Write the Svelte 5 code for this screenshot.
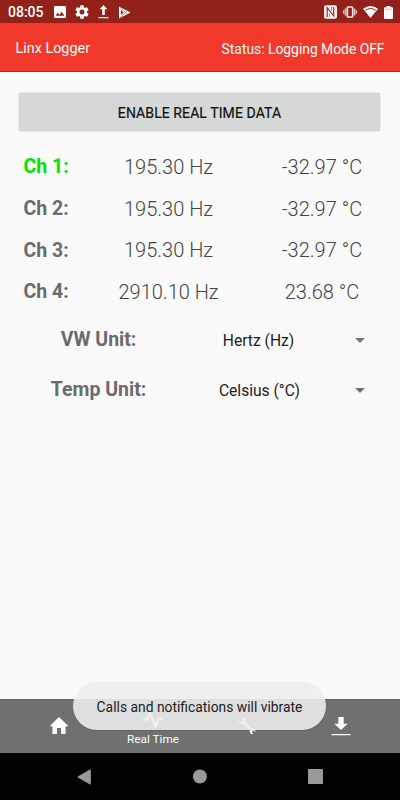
<script>
  const channels = [
    { name: 'Ch 1:', freq: '195.30 Hz', temp: '-32.97 °C', active: true },
    { name: 'Ch 2:', freq: '195.30 Hz', temp: '-32.97 °C' },
    { name: 'Ch 3:', freq: '195.30 Hz', temp: '-32.97 °C' },
    { name: 'Ch 4:', freq: '2910.10 Hz', temp: '23.68 °C' }
  ];
  const units = [
    { label: 'VW Unit:', value: 'Hertz (Hz)' },
    { label: 'Temp Unit:', value: 'Celsius (°C)' }
  ];
</script>

<div class="screen">
  <div class="statusbar">
    <span class="time">08:05</span>
    <div class="left-icons">
      <svg width="12" height="12" viewBox="0 0 12 12"><path fill="#fff" fill-rule="evenodd" d="M1.3 0h9.4Q12 0 12 1.3v9.4q0 1.3-1.3 1.3H1.3Q0 12 0 10.700V1.300Q0 0 1.300 0zM1.500 9.700h9L7.700 5.700 5.400 8.700 3.700 6.700z" /></svg>
      <svg width="14" height="14" viewBox="2 2 20 20"><path fill="#fff" d="M19.140 12.940c.04-.3.060-.61.060-.94s-.02-.64-.07-.94l2.030-1.580a.49.49 0 0 0 .12-.61l-1.920-3.320a.49.49 0 0 0-.59-.22l-2.390.96a7 7 0 0 0-1.620-.94l-.36-2.540A.48.48 0 0 0 13.920 2.400h-3.840a.48.48 0 0 0-.47.41l-.36 2.540a7.400 7.400 0 0 0-1.620.94l-2.390-.96a.48.48 0 0 0-.59.220L2.740 8.870a.48.48 0 0 0 .12.610l2.030 1.580a6 6 0 0 0 0 1.880l-2.030 1.580a.49.49 0 0 0-.12.610l1.920 3.320c.12.220.370.290.590.220l2.390-.96c.5.380 1.030.7 1.620.94l.36 2.540c.05.240.240.410.480.410h3.840c.24 0 .44-.17.47-.41l.36-2.540a7 7 0 0 0 1.620-.94l2.390.96c.22.080.470 0 .59-.22l1.920-3.320a.48.48 0 0 0-.12-.61zM12 15.600a3.600 3.600 0 1 1 0-7.200 3.600 3.600 0 0 1 0 7.200z" /></svg>
      <svg width="11" height="14" viewBox="0 0 11 14"><path fill="#fff" d="M5.500 0 9.300 4.200H6.800V10H4.200V4.200H1.700zM.5 12h10v1.200H.5z" /></svg>
      <svg width="13" height="13" viewBox="0 0 13 13"><path fill="#fff" d="M1 .5 12.500 6.500 1 12.500z" /><path d="m2.200 1.500 7 6.800M2.200 11.500l7-6.800" stroke="#b5625c" stroke-width=".8" fill="none" /><path fill="#922119" d="m3 4 2.500 2.500L3 9z" /></svg>
    </div>
    <div class="right-icons">
      <svg width="13" height="14" viewBox="0 0 13 14"><rect y=".3" width="13" height="13.400" rx="2" fill="#fbf0ef" /><path d="M3.200 12V2.700L9.700 11V2" stroke="#922119" stroke-width="1.100" fill="none" /><path d="M5.500 12V8.500M7.500 2v3.500" stroke="#a9443d" stroke-width=".7" fill="none" /></svg>
      <svg width="14" height="12" viewBox="0 0 14 12"><rect x="4.300" y="1" width="5.400" height="10" rx=".8" fill="none" stroke="#f5e5e4" stroke-width="1.700" /><path d="M2.400 2.500v7M11.600 2.500v7M.6 4.300v3.400M13.400 4.300v3.400" stroke="#e5c4c1" stroke-width="1.400" /></svg>
      <svg width="15" height="12" viewBox="0 0 15 12"><path fill="#fff" d="M7.500 12 0 2.800Q7.500-2.600 15 2.800z" /><path d="M2.200 4.400q5.300-3.700 10.600 0" fill="none" stroke="#922119" stroke-width="1" /></svg>
      <svg width="9" height="13" viewBox="0 0 9 13"><path fill="#fff" d="M2.500 0h4v1.300H8q1 0 1 1V12q0 1-1 1H1q-1 0-1-1V2.300q0-1 1-1h1.500z" /><path d="M1 3.200h7" stroke="#d6aaa7" stroke-width=".9" /></svg>
    </div>
  </div>

  <header>
    <span class="title">Linx Logger</span>
    <span class="status">Status: Logging Mode OFF</span>
  </header>

  <main>
    <button class="enable"><span>ENABLE REAL TIME DATA</span></button>
    <div class="channels">
      {#each channels as c}
        <div class="channel">
          <b class:active={c.active}>{c.name}</b>
          <span class="freq">{c.freq}</span>
          <span class="temp">{c.temp}</span>
        </div>
      {/each}
    </div>
    <div class="units">
      {#each units as u}
        <div class="unit">
          <b>{u.label}</b>
          <span class="value">{u.value}</span>
          <svg width="10" height="5" viewBox="0 0 10 5"><path fill="#737373" d="M0 0h10L5 5z" /></svg>
        </div>
      {/each}
    </div>
  </main>

  <nav class="tabs">
    <div class="tab home">
      <svg width="20" height="17" viewBox="0 0 20 17"><path fill="#fff" d="M8 17v-6h4v6h4.600V9.200H19.500L10 0 .5 9.200h2.900V17z" /></svg>
    </div>
    <div class="tab real">
      <svg width="20" height="18" viewBox="0 0 20 18"><path d="M0 8.500h4L7 1.500 12.500 16 15.500 7.500H20" fill="none" stroke="#fff" stroke-width="2.300" stroke-linejoin="round" /></svg>
      <span>Real Time</span>
    </div>
    <div class="tab tools">
      <svg width="18" height="18" viewBox="0 0 18 18"><path fill="#fff" d="M3.700.5Q6.400.2 7.300 2.500q.4 1.300 0 2.300l6.100 6.700q2-.5 3.300.8 1 1.200.7 2.600l-2-1.500-1.700 1.700 1.700 2q-1.700.4-3-.8-1.200-1.300-.7-3L5.200 7.100q-1.500.5-3-.4Q.3 5.600.5 3.500l2.600 1.600 2.100-1.700z" /></svg>
    </div>
    <div class="tab download">
      <svg width="20" height="19" viewBox="0 0 20 19"><path fill="#fff" d="M7.300 0h5.400v6.800h4L10 13 3.300 6.800h4zM.5 17h19v1.300H.5z" /></svg>
    </div>
  </nav>

  <div class="sysnav">
    <svg width="14" height="16" viewBox="0 0 14 16"><path fill="#999" stroke="#999" stroke-linejoin="round" d="M13.300.8v14.400L.8 8z" /></svg>
    <svg width="15" height="15" viewBox="0 0 15 15"><circle cx="7.900" cy="7.500" r="7" fill="#999" /></svg>
    <svg width="15" height="15" viewBox="0 0 15 15"><rect width="15" height="15" rx="1" fill="#999" /></svg>
  </div>

  <div class="toast">Calls and notifications will vibrate</div>
</div>

<style>
  :global(body) { margin: 0; }
  .screen {
    position: relative;
    display: flex;
    flex-direction: column;
    width: 400px;
    height: 800px;
    overflow: hidden;
    background: #fafafa;
    font-family: Roboto, "Liberation Sans", sans-serif;
    color: #6b6b6b;
  }
  svg { display: block; flex: none; }
  .statusbar {
    box-sizing: border-box;
    height: 23px;
    padding: 1px 7px 0 8px;
    display: flex;
    align-items: center;
    background: #922119;
    color: #fff;
  }
  .time { width: 46px; font-size: 14px; font-weight: 500; line-height: 20px; white-space: nowrap; }
  .left-icons { display: flex; align-items: center; gap: 9px; }
  .right-icons { display: flex; align-items: center; gap: 6px; margin-left: auto; }
  header {
    box-sizing: border-box;
    height: 49px;
    padding: 3px 15.500px 0;
    display: flex;
    align-items: center;
    justify-content: space-between;
    background: #f0392b;
    border-bottom: 1px solid #e21207;
    color: #fff;
    white-space: nowrap;
  }
  .title { font-size: 14.400px; }
  .status { font-size: 13.850px; }
  main { flex: 1; }
  .enable {
    display: flex;
    align-items: center;
    justify-content: center;
    width: 361px;
    height: 38px;
    margin: 21px 0 0 19px;
    padding: 1px 0 0;
    border: 0;
    border-radius: 2px;
    background: #d6d8d7;
    box-shadow: 0 0 2px rgba(0, 0, 0, .25);
    color: #111;
    font: 400 14px Roboto, sans-serif;
    letter-spacing: .09px;
    -webkit-text-stroke: .2px #111;
  }
  .channels { padding: 15px 0 0 23.500px; }
  .channel { display: flex; align-items: center; height: 41.700px; font-size: 19.500px; white-space: nowrap; }
  .channel b { width: 70px; }
  .active { color: #00e400; }
  .freq { width: 152px; text-align: center; font-size: 20px; font-weight: 300; color: #444; }
  .temp { width: 157px; text-align: center; font-size: 20px; font-weight: 300; color: #444; }
  .units { padding-top: 1px; }
  .unit { display: flex; align-items: center; height: 50.700px; white-space: nowrap; }
  .unit b { width: 197px; text-align: center; font-size: 19.500px; }
  .unit svg { margin-top: 2px; }
  .value { width: 125px; margin-right: 33px; text-align: center; font-size: 15.600px; color: #1c1c1c; padding-top: 3px; }
  .unit:first-child .value { text-indent: -2px; }
  .tabs {
    box-sizing: border-box;
    height: 54px;
    display: flex;
    background: #6e7072;
    border-top: 1px solid #606264;
    color: #fff;
  }
  .tab { display: flex; flex-direction: column; align-items: center; }
  .home { width: 118px; padding-top: 17px; }
  .real { width: 70px; padding-top: 11px; font-size: 11.800px; line-height: 14px; }
  .real span { margin-top: 3px; white-space: nowrap; }
  .tools { width: 118px; padding-top: 17px; }
  .download { width: 70px; padding-top: 17px; }
  .sysnav {
    height: 47px;
    display: flex;
    align-items: center;
    justify-content: center;
    gap: 101px;
    background: #000;
  }
  .toast {
    position: absolute;
    left: 73px;
    top: 682px;
    width: 253px;
    height: 48px;
    border-radius: 24px;
    background: rgba(237, 237, 237, .89);
    box-shadow: 0 1px 1px rgba(0, 0, 0, .12);
    color: #1d1d1d;
    font-size: 13.850px;
    line-height: 50px;
    text-align: center;
    white-space: nowrap;
  }
</style>
